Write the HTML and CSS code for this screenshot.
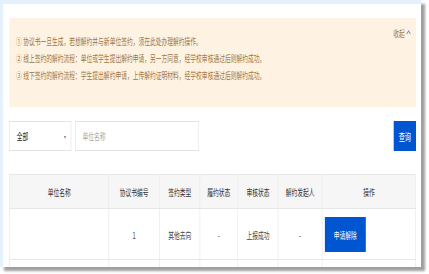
FILE: index.html
```html
<!DOCTYPE html>
<html lang="zh-CN">
<head>
  <meta charset="UTF-8" />
  <meta name="viewport" content="width=device-width, initial-scale=1.0" />
  <title>解约管理</title>
  <link rel="stylesheet" href="styles.css">
</head>
<body>
  <div class="screen">
    <div class="page">
      <div class="frame">
        <div class="card">

          <div class="notice">
            <ul class="notice-list">
              <li>① 协议书一旦生成，若想解约并与新单位签约，须在此处办理解约操作。</li>
              <li>② 线上签约的解约流程：单位或学生提出解约申请，另一方同意，经学校审核通过后则解约成功。</li>
              <li>③ 线下签约的解约流程：学生提出解约申请，上传解约证明材料，经学校审核通过后则解约成功。</li>
            </ul>
            <div class="notice-toggle">
              收起
              <svg class="caret-up" viewBox="0 0 8 6" width="8" height="6">
                <path d="M1 5 L4 1.8 L7 5" fill="none" stroke="#7d86d4" stroke-width="1.2" />
              </svg>
            </div>
          </div>

          <div class="filters">
            <div class="select">
              <span>全部</span>
              <span class="select-arrow">▾</span>
            </div>
            <input class="search-input" type="text" placeholder="单位名称" />
            <button class="btn btn-query">查询</button>
          </div>

          <table class="grid">
            <colgroup>
              <col style="width:160px">
              <col style="width:82px">
              <col style="width:65px">
              <col style="width:61px">
              <col style="width:65px">
              <col style="width:71px">
              <col>
            </colgroup>
            <thead>
              <tr>
                <th>单位名称</th>
                <th>协议书编号</th>
                <th>签约类型</th>
                <th>履约状态</th>
                <th>审核状态</th>
                <th>解约发起人</th>
                <th>操作</th>
              </tr>
            </thead>
            <tbody>
              <tr>
                <td></td>
                <td>1</td>
                <td>其他去向</td>
                <td>-</td>
                <td>上报成功</td>
                <td>-</td>
                <td class="actions"><button class="btn btn-action">申请解除</button></td>
              </tr>
              <tr>
                <td></td>
                <td></td>
                <td></td>
                <td></td>
                <td></td>
                <td></td>
                <td class="actions"><button class="btn btn-action" aria-label="同意"></button><button class="btn btn-action" aria-label="拒绝"></button></td>
              </tr>
            </tbody>
          </table>

        </div>
      </div>
    </div>
  </div>
</body>
</html>
```

FILE: styles.css
```css
html, body {
  margin: 0;
  padding: 0;
  background-color: white;
}

body {
  font-family: "Noto Sans CJK SC", "Noto Sans", sans-serif;
  font-size: 9.3px;
  color: #444;
}

.screen {
  width: 429px;
  height: 274px;
  overflow: hidden;
}

/* the screenshot is squeezed sideways, so the page is laid out wide and narrowed */
.page {
  width: 692px;
  transform: scaleX(0.62);
  transform-origin: 0 0;
}

.frame {
  width: 679px;
  height: 267px;
  background-color: #e4f1fc;
  box-shadow: 6px 4px 3px rgba(0, 0, 0, 0.38);
  padding: 4px 0 0 5px;
  box-sizing: border-box;
}

.card {
  height: 100%;
  background-color: white;
  padding: 14px 8px 0 10px;
  box-sizing: border-box;
  overflow: hidden;
}

.notice {
  display: flex;
  align-items: flex-start;
  background-color: #fef3e2;
  padding: 8px 8px 23px 11px;
  color: #9c7748;
}

.notice-list {
  flex: 1;
  list-style: none;
  margin: 7px 0 0;
  padding: 0;
  line-height: 17px;
}

.notice-toggle {
  display: flex;
  align-items: center;
  gap: 2px;
  line-height: 14px;
  color: #9a7c56;
}

.caret-up {
  display: block;
  margin-top: -3px;
}

.filters {
  display: flex;
  align-items: center;
  margin-top: 14px;
  height: 30px;
}

.select {
  display: flex;
  align-items: center;
  justify-content: space-between;
  width: 100px;
  height: 30px;
  box-sizing: border-box;
  border: 1px solid #e3e3e3;
  padding: 0 7px 0 11px;
  color: #222;
}

.select-arrow {
  font-size: 6px;
  color: #777;
}

.search-input {
  width: 200px;
  height: 30px;
  box-sizing: border-box;
  margin-left: 6px;
  border: 1px solid #e3e3e3;
  padding: 0 11px;
  font-family: inherit;
  font-size: 9.3px;
  outline: none;
}

.search-input::placeholder {
  color: #a8a8a8;
}

.btn {
  border: none;
  background-color: #0055d0;
  color: white;
  font-family: inherit;
  cursor: pointer;
  padding: 0;
}

.btn-query {
  margin-left: auto;
  width: 36px;
  height: 30px;
  font-size: 10px;
}

.grid {
  width: 100%;
  margin-top: 23px;
  border-collapse: collapse;
  table-layout: fixed;
}

.grid th,
.grid td {
  border: 1px solid #e6e6e6;
  text-align: center;
  font-weight: normal;
  white-space: nowrap;
  overflow: hidden;
}

.grid th {
  height: 33px;
  padding: 0;
  background-color: #f6f6f6;
  color: #333;
}

.grid td {
  height: 35px;
  padding: 8px 4px 7px;
  color: #444;
}

.grid td.actions {
  text-align: left;
  padding-left: 4px;
}

.btn-action {
  width: 66px;
  height: 35px;
  font-size: 9.3px;
  margin-right: 2px;
  vertical-align: top;
}
```
